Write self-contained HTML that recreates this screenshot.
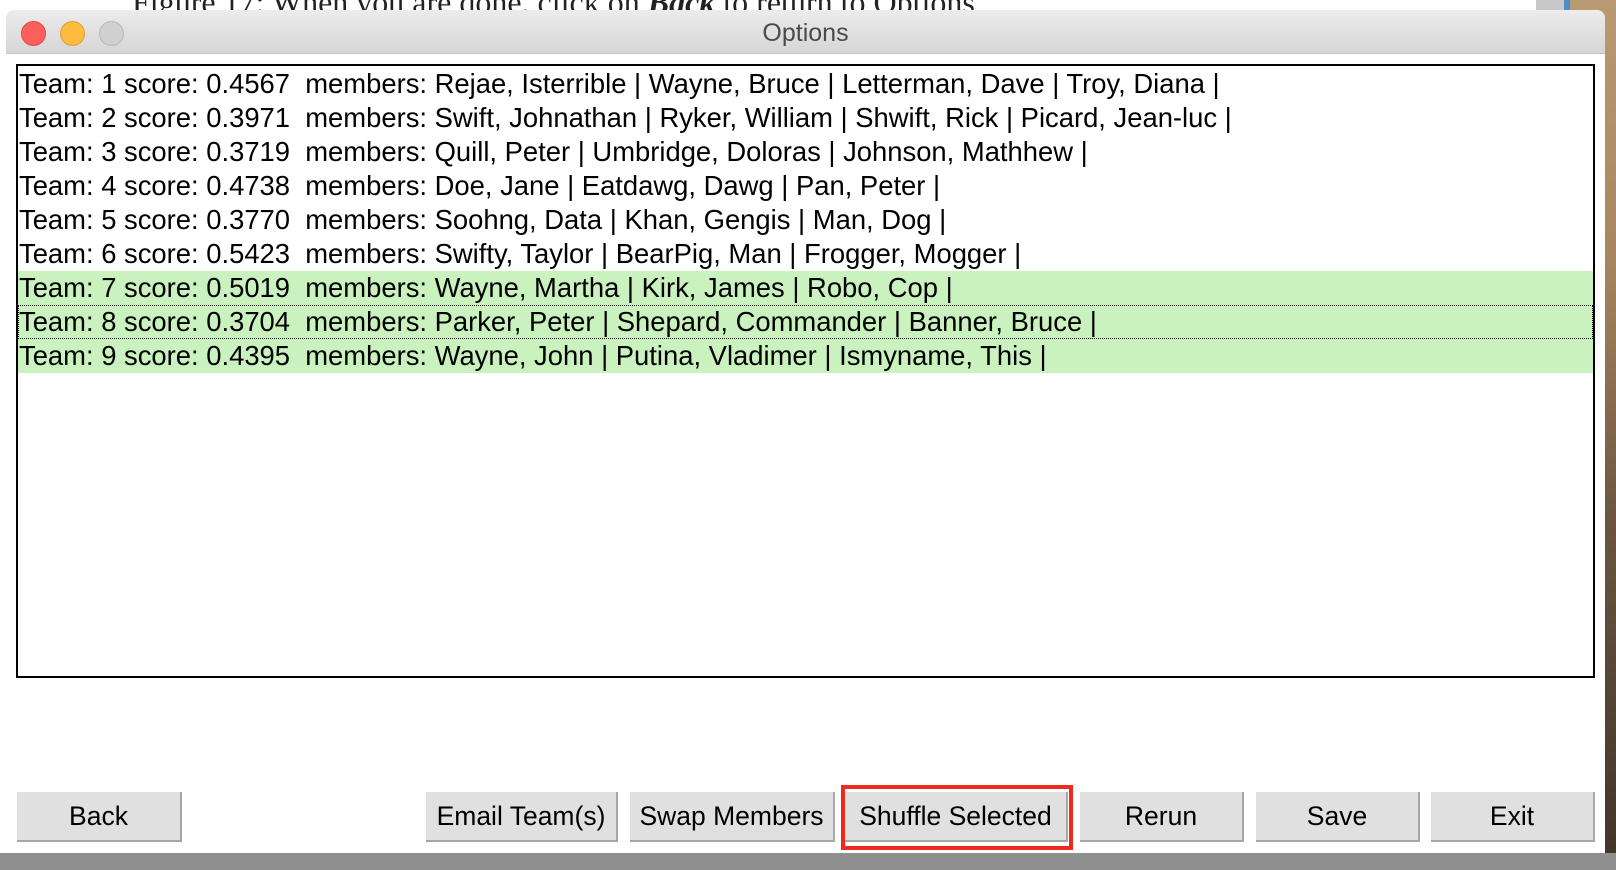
<!DOCTYPE html>
<html><head><style>
body{margin:0;width:1616px;height:870px;position:relative;overflow:hidden;background:#fff;font-family:"Liberation Sans",Arial,sans-serif}
.fig{position:absolute;left:132px;top:-16px;font-family:"Liberation Serif",serif;font-size:32px;color:#222;white-space:nowrap}
.gray{position:absolute;left:1536px;top:0;width:30px;height:870px;background:#c8c8c8}
.blue{position:absolute;left:1564px;top:0;width:6px;height:30px;background:#4a90c8}
.desert{position:absolute;left:1570px;top:0;width:46px;height:870px;background:linear-gradient(180deg,#b99a72 0%,#a88560 30%,#6b5540 60%,#3f342a 100%)}
.bottom{position:absolute;left:0;top:853px;width:1616px;height:17px;background:#8f8f8f}
.win{position:absolute;left:6px;top:10px;width:1599px;height:843px;background:#fff;border-radius:8px 8px 0 0;overflow:hidden}
.title{height:43px;background:linear-gradient(#ececec,#d6d6d6);border-bottom:1px solid #c4c4c4;text-align:center;line-height:46px;font-size:25px;color:#4a4a4a}
.dot{position:absolute;top:11px;width:23px;height:23px;border-radius:50%}
.list{position:absolute;left:10px;top:54px;width:1575px;height:610px;border:2px solid #000;background:#fff}
.row{height:34px;line-height:34px;font-size:27.4px;color:#000;white-space:pre;padding-left:1px;box-sizing:border-box}
.sel{background:#caf2be}
.btn{position:absolute;top:782px;height:50px;background:#e0e0e0;border-right:2px solid #a6a6a6;border-bottom:2px solid #a6a6a6;box-sizing:border-box;text-align:center;line-height:48px;font-size:26.5px;color:#000}
.red{position:absolute;left:835px;top:775px;width:232px;height:65px;border:4px solid #f0281e;box-sizing:border-box}
</style></head><body>
<div class="fig">Figure 17: When you are done, click on <b><i>Back</i></b> to return to Options</div>
<div class="gray"></div><div class="blue"></div><div class="desert"></div>
<div class="bottom"></div>
<div class="win">
<div class="title">Options</div>
<div class="dot" style="left:15px;background:#fc605c;border:1px solid #de4a44"></div>
<div class="dot" style="left:54px;background:#fdbc40;border:1px solid #de9f34"></div>
<div class="dot" style="left:93px;background:#d0d0d0;border:1px solid #b8b8b8"></div>
<div class="list">
<div class="row" style="margin-top:1px">Team: 1 score: 0.4567  members: Rejae, Isterrible | Wayne, Bruce | Letterman, Dave | Troy, Diana |</div>
<div class="row">Team: 2 score: 0.3971  members: Swift, Johnathan | Ryker, William | Shwift, Rick | Picard, Jean-luc |</div>
<div class="row">Team: 3 score: 0.3719  members: Quill, Peter | Umbridge, Doloras | Johnson, Mathhew |</div>
<div class="row">Team: 4 score: 0.4738  members: Doe, Jane | Eatdawg, Dawg | Pan, Peter |</div>
<div class="row">Team: 5 score: 0.3770  members: Soohng, Data | Khan, Gengis | Man, Dog |</div>
<div class="row">Team: 6 score: 0.5423  members: Swifty, Taylor | BearPig, Man | Frogger, Mogger |</div>
<div class="row sel">Team: 7 score: 0.5019  members: Wayne, Martha | Kirk, James | Robo, Cop |</div>
<div class="row sel" style="outline:1px dotted #000;outline-offset:-1px">Team: 8 score: 0.3704  members: Parker, Peter | Shepard, Commander | Banner, Bruce |</div>
<div class="row sel">Team: 9 score: 0.4395  members: Wayne, John | Putina, Vladimer | Ismyname, This |</div>
</div>
<div class="btn" style="left:11px;width:165px">Back</div>
<div class="btn" style="left:420px;width:192px">Email Team(s)</div>
<div class="btn" style="left:624px;width:205px">Swap Members</div>
<div class="btn" style="left:839px;width:223px">Shuffle Selected</div>
<div class="btn" style="left:1074px;width:164px">Rerun</div>
<div class="btn" style="left:1250px;width:164px">Save</div>
<div class="btn" style="left:1425px;width:164px">Exit</div>
<div class="red"></div>
</div>
</body></html>
